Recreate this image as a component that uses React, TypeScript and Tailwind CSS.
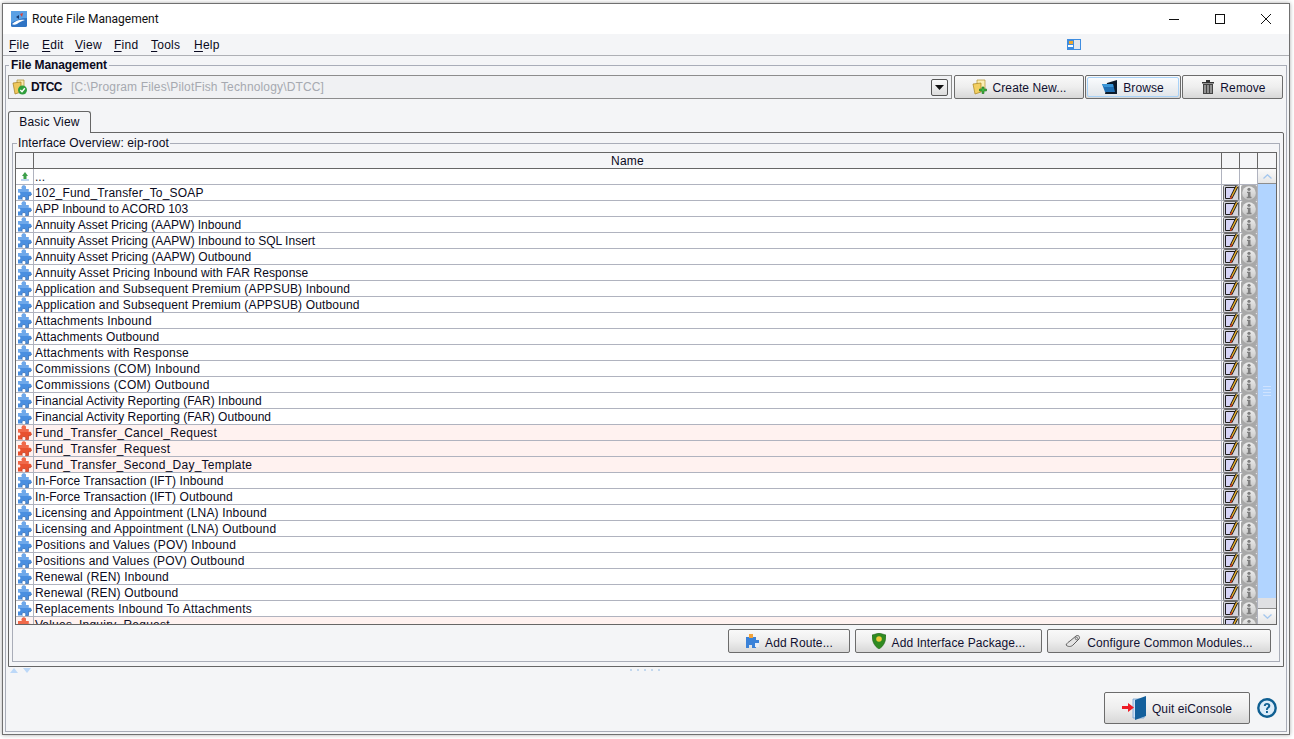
import React from 'react';

const routes = [
  { name: '102_Fund_Transfer_To_SOAP', track: 'tracking-[0.17px]' },
  { name: 'APP Inbound to ACORD 103', track: 'tracking-[0px]' },
  { name: 'Annuity Asset Pricing (AAPW) Inbound', track: 'tracking-[0px]' },
  { name: 'Annuity Asset Pricing (AAPW) Inbound to SQL Insert', track: 'tracking-[0.01px]' },
  { name: 'Annuity Asset Pricing (AAPW) Outbound', track: 'tracking-[0.02px]' },
  { name: 'Annuity Asset Pricing Inbound with FAR Response', track: 'tracking-[0.11px]' },
  { name: 'Application and Subsequent Premium (APPSUB) Inbound', track: 'tracking-[0.15px]' },
  { name: 'Application and Subsequent Premium (APPSUB) Outbound', track: 'tracking-[0.15px]' },
  { name: 'Attachments Inbound', track: 'tracking-[0.18px]' },
  { name: 'Attachments Outbound', track: 'tracking-[0.08px]' },
  { name: 'Attachments with Response', track: 'tracking-[0.21px]' },
  { name: 'Commissions (COM) Inbound', track: 'tracking-[0.29px]' },
  { name: 'Commissions (COM) Outbound', track: 'tracking-[0.28px]' },
  { name: 'Financial Activity Reporting (FAR) Inbound', track: 'tracking-[0.03px]' },
  { name: 'Financial Activity Reporting (FAR) Outbound', track: 'tracking-[0.03px]' },
  { name: 'Fund_Transfer_Cancel_Request', track: 'tracking-[0.3px]', red: true },
  { name: 'Fund_Transfer_Request', track: 'tracking-[0.27px]', red: true },
  { name: 'Fund_Transfer_Second_Day_Template', track: 'tracking-[0.25px]', red: true },
  { name: 'In-Force Transaction (IFT) Inbound', track: 'tracking-[0.07px]' },
  { name: 'In-Force Transaction (IFT) Outbound', track: 'tracking-[0.07px]' },
  { name: 'Licensing and Appointment (LNA) Inbound', track: 'tracking-[0.16px]' },
  { name: 'Licensing and Appointment (LNA) Outbound', track: 'tracking-[0.16px]' },
  { name: 'Positions and Values (POV) Inbound', track: 'tracking-[0.19px]' },
  { name: 'Positions and Values (POV) Outbound', track: 'tracking-[0.16px]' },
  { name: 'Renewal (REN) Inbound', track: 'tracking-[0.18px]' },
  { name: 'Renewal (REN) Outbound', track: 'tracking-[0.18px]' },
  { name: 'Replacements Inbound To Attachments', track: 'tracking-[0.24px]' },
  { name: 'Values_Inquiry_Request', track: 'tracking-[0.22px]', red: true },
];

const menus = [
  { label: 'File', w: 'w-[33px]' },
  { label: 'Edit', w: 'w-[33px]' },
  { label: 'View', w: 'w-[39px]' },
  { label: 'Find', w: 'w-[37px]' },
  { label: 'Tools', w: 'w-[43px]' },
  { label: 'Help', w: 'w-[36px]' },
];

const Puzzle = ({ red }: { red?: boolean }) => (
  <svg width="15" height="15" viewBox="0 0 15 15" className="block -ml-px">
    <path
      d="M1 4H5C4.200 2.500 4.700 0.500 6.800 0.500S9.400 2.500 8.600 4H11.500V7.200C12.800 6.400 14.500 7 14.500 8.800S12.800 11.200 11.500 10.400V14.500H8.500C9.200 13.200 8.700 11.500 6.900 11.500S4.600 13.200 5.300 14.500H1V10.300C2.200 11 3.400 10.300 3.400 9S2.200 7 1 7.700Z"
      fill={red ? '#e8512f' : '#4a8fe0'}
    />
    <path
      d="M1 4H5C4.200 2.500 4.700 0.500 6.800 0.500S9.400 2.500 8.600 4H11.500V7H1Z"
      fill={red ? '#f0694a' : '#6ea8ea'}
    />
    <path d="M5.300 14.500C4.600 13.200 5.100 11.500 6.900 11.500S9.200 13.200 8.500 14.500H11.500V10.400C12.800 11.200 14.500 10.600 14.500 8.800" fill="none" stroke={red ? '#b9341a' : '#2a62a8'} strokeWidth="0.700" />
  </svg>
);

const EditIcon = () => (
  <svg width="16" height="16" viewBox="0 0 16 16" className="block">
    <rect x="0.500" y="0.500" width="15" height="15" rx="1" fill="#d4d4dc" stroke="#6a6a6a" />
    <path d="M2.500 2.500H12L8.500 13.500H2.500Z" fill="#d6d4f6" stroke="#1c1c1c" />
    <path d="M13.800 1.500L8 13" stroke="#1c1c1c" strokeWidth="3" />
    <path d="M13.800 1.500L8 13" stroke="#f0b429" strokeWidth="1.300" />
    <path d="M9 11L7.500 14" stroke="#d63a1e" strokeWidth="1.300" />
  </svg>
);

const InfoIcon = () => (
  <svg width="16" height="16" viewBox="0 0 16 16" className="block">
    <defs>
      <linearGradient id="infoball" x1="0" y1="0" x2="0" y2="1">
        <stop offset="0" stopColor="#ececec" />
        <stop offset="1" stopColor="#c6c6c6" />
      </linearGradient>
    </defs>
    <rect x="0" y="0" width="16" height="16" rx="2" fill="#a8a8a8" />
    <circle cx="8" cy="8" r="6.800" fill="url(#infoball)" />
    <circle cx="8" cy="4.300" r="1.600" fill="#7f7f7f" />
    <path d="M6 6.700H9.500V11.800H10.500V13.200H5.700V11.800H6.900V7.900H6Z" fill="#7f7f7f" />
  </svg>
);

const AppIcon = () => (
  <svg width="16" height="16" viewBox="0 0 16 16">
    <rect width="16" height="16" rx="1.500" fill="#2f74c4" />
    <path d="M0 0H16V7C10 7 5 9 0 12Z" fill="#5aa0e4" />
    <path d="M1 13C5 9 10 8 14 9C11 10 8 11 6 13C4 14 2 14 1 13Z" fill="#ffffff" />
    <path d="M9 3L12 2L11 6Z" fill="#d8433a" />
    <path d="M5 6L8 4L8 8Z" fill="#14386e" />
  </svg>
);

const FolderOkIcon = () => (
  <svg width="16" height="16" viewBox="0 0 16 16">
    <path d="M5 1H12V10H5Z" fill="#f8e8a8" stroke="#a98a2c" strokeWidth="0.700" />
    <path d="M1 4L9 3V13L3 15Z" fill="#eec75c" stroke="#a07c1e" strokeWidth="0.700" />
    <circle cx="10.500" cy="11" r="4.500" fill="#2f9e3c" />
    <path d="M8.300 11L10 12.800L12.800 9.200" stroke="#fff" strokeWidth="1.400" fill="none" />
  </svg>
);

const FolderPlusIcon = () => (
  <svg width="15" height="16" viewBox="0 0 15 16">
    <path d="M5 1H13V11H5Z" fill="#fbeeb4" stroke="#b4922e" strokeWidth="0.700" />
    <path d="M1 5L9 4V13L3 15Z" fill="#f2cf62" stroke="#a88420" strokeWidth="0.700" />
    <path d="M10 8H12V10H14.500V12H12V14.500H10V12H7.500V10H10Z" fill="#3fb53f" stroke="#1b6d1b" strokeWidth="0.600" />
  </svg>
);

const BrowseIcon = () => (
  <svg width="16" height="14" viewBox="0 0 16 14">
    <path d="M5 3L15 0V14H3Z" fill="#0c1a2a" />
    <path d="M0 4H11L13 12H3Z" fill="#1f6fb4" />
    <path d="M0 4H11L11.500 7H2Z" fill="#3a96d8" />
  </svg>
);

const TrashIcon = () => (
  <svg width="12" height="14" viewBox="0 0 12 14">
    <path d="M0 2H12V3.500H0Z M4 0H8V2H4Z" fill="#333" />
    <path d="M1 4H11V14H1Z" fill="#444" />
    <path d="M3 5V13M6 5V13M9 5V13" stroke="#ddd" strokeWidth="1" />
  </svg>
);

const ShieldIcon = () => (
  <svg width="14" height="16" viewBox="0 0 14 16">
    <path d="M7 0L14 2C14 8 12 13 7 16C2 13 0 8 0 2Z" fill="#2f8a22" stroke="#1c5c16" strokeWidth="0.500" />
    <circle cx="7" cy="6" r="2.800" fill="#eec93a" />
  </svg>
);

const ModulesIcon = () => (
  <svg width="16" height="14" viewBox="0 0 16 14" fill="none">
    <path d="M1 11C3 13 6 13 8 11L14 5C15.500 3 13.500 0.500 11 2L5 7C3.500 8 2 9 1 11Z" fill="#e4e4e4" stroke="#5e5e5e" strokeWidth="1" />
    <circle cx="11.500" cy="4.500" r="1.200" stroke="#6e6e6e" />
  </svg>
);

const RouteIcon = () => (
  <svg width="14" height="16" viewBox="0 0 14 16">
    <path d="M1 4H4V1H8V4H11V7H14V11H11V15H7V12H4V15H1Z" fill="#3b82d8" />
    <path d="M4 1H8V5H4Z" fill="#f2a33a" />
    <path d="M10 10H14V14H10Z" fill="#e8eef8" />
  </svg>
);

const DoorIcon = () => (
  <svg width="26" height="24" viewBox="0 0 26 24">
    <path d="M11 3H22V22H11Z" fill="#cfe2f6" stroke="#6f9fcf" strokeWidth="0.800" />
    <path d="M13 4L24 0V20L13 24Z" fill="#14609c" />
    <path d="M0 10H6V7L12 11.500L6 16V13H0Z" fill="#ee1c25" />
  </svg>
);

const HelpIcon = () => (
  <svg width="20" height="20" viewBox="0 0 20 20">
    <circle cx="10" cy="10" r="8.700" fill="#dcecf9" stroke="#0f5f92" strokeWidth="2.400" />
    <path d="M6.800 8C6.800 5.900 8.200 5 10 5s3.300 1 3.300 2.800c0 2.400-2.500 2.300-2.500 4.200H9c0-2.900 2.200-2.800 2.200-4.200 0-.7-.5-1.100-1.200-1.100s-1.200.4-1.200 1.300ZM9 13H10.900V15H9Z" fill="#0f5f92" />
  </svg>
);

const Chevron = ({ up }: { up?: boolean }) => (
  <svg width="9" height="5" viewBox="0 0 9 5" fill="none">
    <path d={up ? 'M0.500 4.500L4.500 0.800L8.500 4.500' : 'M0.500 0.500L4.500 4.200L8.500 0.500'} stroke="#a3c6ee" strokeWidth="1.300" />
  </svg>
);

const Btn = ({ icon, label, w, h = 'h-[24px]', focus, gap = 'gap-[6px]', labelPad = 'pt-px' }: { icon: React.ReactNode; label: string; w: string; h?: string; focus?: boolean; gap?: string; labelPad?: string }) => (
  <button className={`${w} ${h} shrink-0 flex items-center justify-center ${gap} rounded-[2px] border border-[#6c6c6c] bg-gradient-to-b from-[#f9f9f9] via-[#eeeeee] to-[#d8d8d8] text-[12px] text-[#101030] tracking-[0.1px] ${focus ? 'p-px' : ''}`}>
    {focus ? (
      <span className={`w-full h-full flex items-center justify-center ${gap} rounded-[2px] border border-[#a8d2f8] bg-gradient-to-b from-[#f9fbfd] to-[#e2e6ea]`}>
        {icon}
        <span className={labelPad}>{label}</span>
      </span>
    ) : (
      <>
        {icon}
        <span className={labelPad}>{label}</span>
      </>
    )}
  </button>
);

export default function App() {
  return (
    <div className="w-[1294px] h-[739px] bg-white pl-[2px] pt-[3px] pr-[4px] pb-[4px] overflow-hidden font-['Liberation_Sans',sans-serif] text-[12px] text-[#0a0a20]">
      <div className="h-full flex flex-col border border-[#707070] bg-[#f4f5f7] shadow-[0_0_4px_rgba(0,0,0,0.35)]">
        <div className="h-[30px] shrink-0 bg-white flex items-center pl-[8px]">
          <AppIcon />
          <span className="ml-[5px] font-['Roboto',sans-serif] text-[12px] text-[#111]">Route File Management</span>
          <div className="ml-auto flex items-center">
            <div className="w-[46px] flex justify-center">
              <svg width="10" height="10" viewBox="0 0 10 10"><path d="M0 5.500H10" stroke="#111" /></svg>
            </div>
            <div className="w-[46px] flex justify-center">
              <svg width="10" height="10" viewBox="0 0 10 10"><rect x="0.500" y="0.500" width="9" height="9" fill="none" stroke="#111" /></svg>
            </div>
            <div className="w-[46px] flex justify-center">
              <svg width="10" height="10" viewBox="0 0 10 10"><path d="M0 0L10 10M10 0L0 10" stroke="#111" /></svg>
            </div>
          </div>
        </div>

        <div className="h-[22px] shrink-0 flex items-center pl-[6px] border-b border-[#aeb0b5] tracking-[0.25px]">
          {menus.map((m) => (
            <span key={m.label} className={m.w}>
              <span className="underline underline-offset-2">{m.label[0]}</span>
              {m.label.slice(1)}
            </span>
          ))}
          <svg className="ml-[837px]" width="14" height="11" viewBox="0 0 14 11">
            <rect width="14" height="11" fill="#3f8de0" />
            <rect x="7" y="1" width="6" height="9" fill="#e4e8ee" />
            <rect x="2" y="2" width="4" height="3" fill="#f0a830" />
            <rect x="1" y="6" width="5" height="2" fill="#ffffff" />
          </svg>
        </div>

        <fieldset className="flex-1 min-h-0 mx-[2px] mt-[2px] mb-[2px] border border-[#a9adb8] px-[2px] pb-[4px] flex flex-col">
          <legend className="ml-[1px] px-[2px] font-bold leading-[14px] tracking-[-0.1px]">File Management</legend>
          <div className="flex items-stretch h-[24px] mt-[3px]">
            <div className="w-[944px] flex items-center border border-[#8d8d8d] bg-[#f0f1f3] pl-[3px] pr-[3px]">
              <FolderOkIcon />
              <span className="ml-[3px] font-bold tracking-[-0.6px]">DTCC</span>
              <span className="ml-[9px] text-[#a6a9b0] tracking-[0.15px]">[C:\Program Files\PilotFish Technology\DTCC]</span>
              <div className="ml-auto w-[17px] h-[17px] flex items-center justify-center rounded-[2px] border border-[#555] bg-gradient-to-b from-[#fafafa] to-[#dcdcdc]">
                <svg width="9" height="5" viewBox="0 0 9 5"><path d="M0 0H9L4.500 5Z" fill="#111" /></svg>
              </div>
            </div>
            <div className="ml-[2px] flex gap-px">
              <Btn icon={<FolderPlusIcon />} label="Create New..." w="w-[130px]" />
              <Btn icon={<BrowseIcon />} label="Browse" w="w-[96px]" gap="gap-[5px]" focus />
              <Btn icon={<TrashIcon />} label="Remove" w="w-[101px] pl-[3px]" />
            </div>
          </div>

          <div className="mt-[12px] h-[22px] w-[83px] flex items-center justify-center pb-px rounded-t-[3px] border border-b-0 border-[#666] bg-[#f4f5f7] tracking-[0.2px] relative z-10 -mb-px">
            Basic View
          </div>
          <div className="h-[535px] w-[1276px] border border-[#666] rounded-tr-[2px] px-[3px] pb-[4px] pt-[4px] flex flex-col">
            <fieldset className="h-[525px] border border-[#a9adb8] px-[2px] flex flex-col">
              <legend className="ml-[2px] px-[1px] leading-[12px] tracking-[0.13px]">Interface Overview: eip-root</legend>
              <div className="h-[473px] mt-[3px] shrink-0 flex border border-[#666] overflow-hidden bg-white">
                <div className="w-[1242px] h-full overflow-hidden flex flex-col">
                  <div className="h-[16px] shrink-0 flex border-b border-[#666] bg-[#f4f5f7]">
                    <div className="w-[18px] border-r border-[#666]" />
                    <div className="w-[1188px] border-r border-[#666] text-center leading-[17px] tracking-[0.25px]">Name</div>
                    <div className="w-[18px] border-r border-[#666]" />
                    <div className="w-[18px] border-r border-[#666]" />
                  </div>
                  <div className="h-[16px] shrink-0 flex border-b border-[#b0b3bf]">
                    <div className="w-[18px] border-r border-[#b0b3bf] flex items-center justify-center">
                      <svg width="8" height="9" viewBox="0 0 8 9">
                        <path d="M4 0L7 4H5.500V7H2.500V4H1Z" fill="#3da04a" />
                        <rect x="0" y="7" width="8" height="2" fill="#bcd4ee" />
                      </svg>
                    </div>
                    <div className="w-[1188px] border-r border-[#b0b3bf] pl-[1px] leading-[17px]">...</div>
                    <div className="w-[18px] border-r border-[#b0b3bf]" />
                    <div className="w-[18px] border-r border-[#b0b3bf]" />
                  </div>
                  {routes.map((r) => (
                    <div key={r.name} className={`h-[16px] shrink-0 flex border-b border-[#b0b3bf] ${r.red ? 'bg-[#fff2f0]' : 'bg-white'}`}>
                      <div className="w-[18px] border-r border-[#b0b3bf] flex items-center justify-center">
                        <Puzzle red={r.red} />
                      </div>
                      <div className={`w-[1188px] border-r border-[#b0b3bf] pl-[1px] leading-[17px] whitespace-nowrap ${r.track}`}>{r.name}</div>
                      <div className="w-[18px] border-r border-[#b0b3bf] flex items-center justify-center bg-white"><EditIcon /></div>
                      <div className="w-[18px] border-r border-[#b0b3bf] flex items-center justify-center bg-white"><InfoIcon /></div>
                    </div>
                  ))}
                </div>
                <div className="flex-1 flex flex-col bg-[#f4f5f7]">
                  <div className="h-[16px] shrink-0 border-b border-[#666]" />
                  <div className="h-[15px] shrink-0 flex items-center justify-center border-b border-[#8d8d8d] bg-gradient-to-b from-[#fafafa] to-[#e6e6e6]">
                    <Chevron up />
                  </div>
                  <div className="h-[414px] shrink-0 bg-[#b1d4ff] flex flex-col items-center justify-center gap-[2px]">
                    <div className="w-[8px] h-px bg-[#cfe3ff]" />
                    <div className="w-[8px] h-px bg-[#cfe3ff]" />
                    <div className="w-[8px] h-px bg-[#cfe3ff]" />
                    <div className="w-[8px] h-px bg-[#cfe3ff]" />
                  </div>
                  <div className="h-[10px] shrink-0 bg-[#dfe0e3]" />
                  <div className="flex-1 flex items-center justify-center border-t border-[#8d8d8d] bg-gradient-to-b from-[#fafafa] to-[#e6e6e6]">
                    <Chevron />
                  </div>
                </div>
              </div>
              <div className="mt-[4px] flex justify-end gap-[5px] pr-[6px]">
                <Btn icon={<RouteIcon />} label="Add Route..." w="w-[122px]" labelPad="pt-[3px]" />
                <Btn icon={<ShieldIcon />} label="Add Interface Package..." w="w-[187px]" labelPad="pt-[3px]" />
                <Btn icon={<ModulesIcon />} label="Configure Common Modules..." w="w-[224px]" labelPad="pt-[3px]" />
              </div>
            </fieldset>
          </div>

          <div className="h-[6px] flex items-center pl-[2px] pr-[2px] relative">
            <svg width="22" height="5" viewBox="0 0 22 5">
              <path d="M0 5L4 0L8 5Z" fill="#bcd8f8" />
              <path d="M13 0H21L17 5Z" fill="#bcd8f8" />
            </svg>
            <div className="ml-[598px] flex gap-[5px]">
              {[0, 1, 2, 3, 4].map((d) => (
                <div key={d} className="w-[2px] h-[2px] bg-[#c3d8ee]" />
              ))}
            </div>
          </div>

          <div className="mt-auto mb-[3px] flex items-center justify-end pr-[7px] gap-[7px]">
            <Btn icon={<DoorIcon />} label="Quit eiConsole" w="w-[146px]" h="h-[32px]" gap="gap-[4px]" />
            <HelpIcon />
          </div>
        </fieldset>
      </div>
    </div>
  );
}
